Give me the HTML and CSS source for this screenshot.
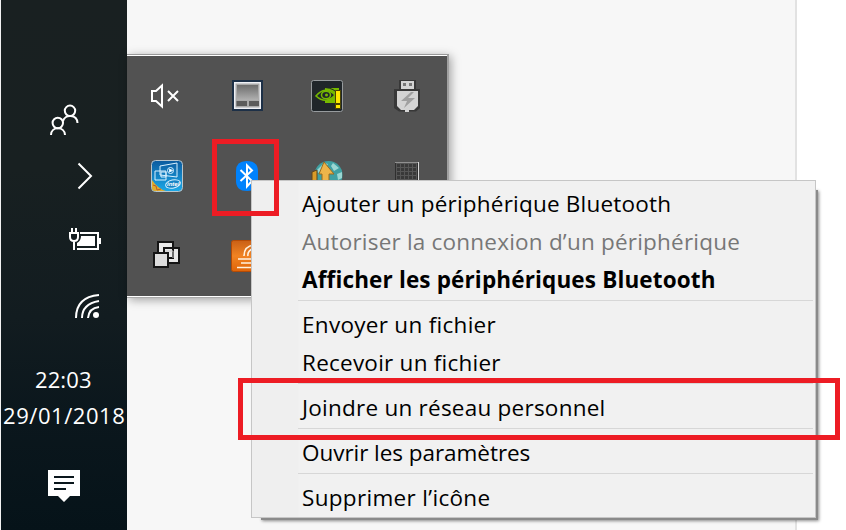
FILE: index.html
```html
<!DOCTYPE html>
<html lang="fr">
<head>
<meta charset="utf-8">
<title>Menu Bluetooth</title>
<link rel="stylesheet" href="styles.css">
</head>
<body>
<div class="desktop">
  <aside class="taskbar">
    <svg class="people" width="30" height="32" viewBox="49 104 30 32" fill="none" stroke="#fff" stroke-width="2"><circle cx="57.800" cy="123" r="5.200"/><path d="M51 135c0-9 13.800-9 14 0"/><circle cx="70" cy="110.800" r="5.200"/><path d="M63 121c2-7 14-7 14.500 2"/></svg>
    <svg class="chevron" width="16" height="28" viewBox="77 162 16 28" fill="none" stroke="#fff" stroke-width="2"><path d="M78.500 163.500 91 176 78.500 188.500"/></svg>
    <svg class="battery" width="34" height="24" viewBox="68 227 34 24"><path d="M80 233H98V249H77" fill="none" stroke="#fff" stroke-width="2"/><path d="M81 236H95V246H77V243Q81 241 81 236M99 238h2v6h-2z" fill="#fff"/><path d="M72 228v5M76 228v5M74 242v8M70 233h8v4q0 4-4 4t-4-4z" fill="none" stroke="#fff" stroke-width="2"/></svg>
    <svg class="wifi" width="26" height="26" viewBox="74 293 26 26" fill="none" stroke="#fff" stroke-width="2"><circle cx="96" cy="315" r="3" fill="#fff" stroke="none"/><path d="M76 318Q76 297 99 295M82 318Q82 304 99 301M88 318Q89 308 99 307"/></svg>
    <div class="clock"><span class="time">22:03</span><span class="date">29/01/2018</span></div>
    <svg class="notice" width="32" height="32" viewBox="48 470 32 32"><path d="M48 470H80V496H70L64 502 58 496H48z" fill="#fff"/><path d="M54 477H74M54 483H74M54 489H66" stroke="#0a161c" stroke-width="2"/></svg>
  </aside>

  <section class="tray">
    <div class="cell"><svg width="32" height="32" viewBox="151 80 32 32" fill="none" stroke="#fff" stroke-width="2"><path d="M152 91H156L162 85.500V106.500L156 101H152zM168 91 178 101M178 91 168 101"/></svg></div>
    <div class="cell"><svg width="32" height="32" viewBox="231 80 32 32"><defs><linearGradient id="pad" x2="0" y2="1"><stop stop-color="#6d6d6d"/><stop offset="1" stop-color="#b0b0b0"/></linearGradient></defs><path d="M232 80h31v31h-31z" fill="#1d3047"/><path d="M234 82h27v27h-27z" fill="#eef0f5"/><path d="M235.500 83.500h24v24h-24z" fill="#a9a9a9"/><path d="M237 85h21v15h-21z" fill="url(#pad)"/><path d="M236.500 101h10.500v5h-10.500zM249 101h10v5h-10z" fill="#5b5b5b"/></svg></div>
    <div class="cell"><svg width="32" height="32" viewBox="311 80 32 32"><rect x="311.500" y="80.500" width="31" height="31" rx="2" fill="#20262a" stroke="#979b9e"/><path d="M325 88H339V103H325z" fill="#76b900"/><path d="M316 96Q325 85 335 95 326 105 316 96z" fill="#20262a" stroke="#76b900" stroke-width="1.600"/><ellipse cx="326" cy="95" rx="4.500" ry="3.800" fill="#20262a" stroke="#76b900" stroke-width="1.500"/><circle cx="326.500" cy="95" r="1.500" fill="#76b900"/><path d="M325 87.500Q334 88 339 95" fill="none" stroke="#20262a"/><path d="M335.500 90.500h5v13h-5zM335.500 104.500h5v4h-5z" fill="#ffe800" stroke="#4a4300"/></svg></div>
    <div class="cell"><svg width="32" height="32" viewBox="391 80 32 32"><path d="M399 80h17v9h4v19l-4 3.500h-17l-5-3.500V89h5z" fill="#383838"/><path d="M401 81h13v8h-13zM397 91h21v15l-4 4h-5v2h-4v-2h-4l-4-4z" fill="#d4d4d4"/><path d="M403 83h3v3h-3zM409 83h3v3h-3z" fill="#777"/><path d="m411 92-10 9h6l-3 7 11-10h-7l6-6z" fill="#a0a0a0"/></svg></div>

    <div class="cell"><svg width="32" height="32" viewBox="151 160 32 32"><defs><linearGradient id="intel" x2="0" y2="1"><stop stop-color="#0b5b9f"/><stop offset="1" stop-color="#1ca9e8"/></linearGradient></defs><rect x="151.500" y="160.500" width="31" height="31" rx="4" fill="url(#intel)" stroke="#b9c5cc"/><path d="M152 180Q158 189 166 191H155Q152 191 152 188z" fill="#e0ad2e"/><path d="m153 185 3 1 1 4 4-1" fill="none" stroke="#bf5a25"/><g fill="none" stroke="#d8f1ff"><path d="m160 166 17-3v14l-17-2zM155 171h11v9h-11zM161 172h5v5h-5z"/><circle cx="170.500" cy="170.500" r="3"/><path d="m169.500 169 3 1.500-3 1.500z" fill="#fff"/><ellipse cx="173" cy="184" rx="7.500" ry="4" transform="rotate(-12 173 184)" fill="#1784c5"/></g><text x="167" y="186" class="intel-name">intel</text></svg></div>
    <div class="cell"><svg width="32" height="32" viewBox="231 160 32 32"><path d="M246.500 161Q258 161 258 171V181Q258 191 247 191 236 191 236 181V171Q236 161 246.500 161z" fill="#0082fc"/><path d="m240.500 170 11.500 11-5 5.500v-21l5 5-11.500 10.500" fill="none" stroke="#fff" stroke-width="2"/></svg></div>
    <div class="cell"><svg width="32" height="32" viewBox="311 160 32 32"><circle cx="328.500" cy="175" r="14" fill="#3fa0a2"/><path d="m317 170 7-7 4 1-3 5-7 4zM333 163l6 5-5 3-3-5zM337 174l5-2v6l-4 2z" fill="#9ad7d2"/><path d="M312 172l5-2v17h-5z" fill="#d99b28" stroke="#5e441d"/><path d="m324 162 10 12h-5v14h-7v-14h-3z" fill="#edb54a" stroke="#9a6b20"/></svg></div>
    <div class="cell"><svg width="32" height="32" viewBox="391 160 32 32"><defs><pattern id="mesh" x="396" y="163" width="4" height="4" patternUnits="userSpaceOnUse"><path d="M0 0h4v4H0z" fill="#565656"/><path d="M1 1h3v3H1z" fill="#393939"/></pattern></defs><path d="M395 162h24v29h-24z" fill="#2f2f2f"/><path d="M396 163h21v27h-21z" fill="url(#mesh)"/><path d="M395 162.500h23" fill="none" stroke="#909090"/><path d="M418.500 162v29" fill="none" stroke="#d8d8d8"/></svg></div>

    <div class="cell"><svg width="32" height="32" viewBox="151 240 32 32" fill="#e9e9e9" stroke="#151515" stroke-width="2"><path d="M158 242h15v16h-15zM164 248h15v15h-15z"/><path d="M154 253h14v14h-14z" fill="#ddd"/><path d="M165 251h8v7" fill="none" stroke="#c8c8c8" stroke-width="1"/></svg></div>
    <div class="cell"><svg width="32" height="32" viewBox="231 240 32 32"><defs><linearGradient id="java" x2="0" y2="1"><stop stop-color="#c96016"/><stop offset=".5" stop-color="#f18322"/><stop offset="1" stop-color="#df6409"/></linearGradient></defs><rect x="231.500" y="240.500" width="31" height="31" rx="2" fill="url(#java)" stroke="#b54b05"/><path d="M244 256q0-10 10-11M248 256q-1-5 6-8M238 259h14M241 263h12M237 267.500h18" fill="none" stroke="#fff2df" stroke-width="1.600"/></svg></div>
  </section>

  <div class="page-edge"></div>

  <nav class="menu">
    <div class="item"><span class="add">Ajouter un périphérique Bluetooth</span></div>
    <div class="item disabled"><span class="allow">Autoriser la connexion d’un périphérique</span></div>
    <div class="item default"><span class="show">Afficher les périphériques Bluetooth</span></div>
    <hr>
    <div class="item"><span class="send">Envoyer un fichier</span></div>
    <div class="item"><span class="receive">Recevoir un fichier</span></div>
    <hr>
    <div class="item"><span class="join">Joindre un réseau personnel</span></div>
    <hr>
    <div class="item"><span class="settings">Ouvrir les paramètres</span></div>
    <hr>
    <div class="item"><span class="remove">Supprimer l’icône</span></div>
  </nav>
  <div class="marker marker-icon"></div>
  <div class="marker marker-item"></div>
</div>
</body>
</html>
```
FILE: styles.css
```css
* { box-sizing: border-box; }
body { margin: 0; overflow: hidden; font-family: "Open Sans", "Noto Sans", sans-serif; }
.desktop { position: relative; width: 846px; height: 530px; display: flex; background: #f7f7f7; overflow: hidden; }
svg { display: block; flex: none; }

.taskbar { width: 127px; flex: none; display: flex; flex-direction: column; align-items: flex-start; padding-top: 104px; border-left: 1px solid #f2f2f2; background: linear-gradient(#192021 0%, #182021 32%, #121c20 60%, #0b171d 78%, #061319 100%); color: #fff; }
.people { margin-left: 48px; }
.chevron { margin: 26px 0 0 76px; }
.battery { margin: 37px 0 0 67px; }
.wifi { margin: 42px 0 0 73px; }
.clock { margin-top: 42px; width: 126px; display: flex; flex-direction: column; font-size: 22px; line-height: 36px; white-space: nowrap; }
.time { margin-left: 34px; letter-spacing: 0.1px; }
.date { margin-left: 2px; letter-spacing: 0.55px; }
.notice { margin: 37px 0 0 47px; }

.tray { width: 322px; height: 244px; flex: none; margin-top: 54px; display: grid; grid-template: repeat(3, 80px) / repeat(4, 80px); background: #525252; border-top: 1px solid #999; border-right: 2px solid #a0a0a0; border-bottom: 1px solid #aaa; box-shadow: inset 0 1px #fff, inset 0 -1px #fff, 2px 2px 9px rgba(0, 0, 0, .35); padding-top: 1px; }
.cell { display: flex; align-items: center; justify-content: center; }
.intel-name { font: italic bold 6px "Liberation Sans", sans-serif; fill: #fff; }
.page-edge { margin-left: auto; width: 51px; background: #fff; border-left: 2px solid #e2e2e2; flex: none; }

.menu { position: absolute; left: 251px; top: 180px; width: 565px; height: 338px; padding: 4px 2px 0 46px; border: 1px solid #c6c6c6; background: linear-gradient(90deg, #efefef 46px, #f1f1f1 47px); box-shadow: 6px 6px 0 -4px #8a8a8a, 7px 7px 3px -4px rgba(0, 0, 0, .45); }
.item { height: 38px; padding-left: 4px; font-size: 22.5px; line-height: 38px; white-space: nowrap; color: #000; }
.disabled { color: #777; }
.default { font-weight: 700; }
.menu hr { height: 1px; margin: 1px 0 5px; border: 0; background: #d7d7d7; }
.add, .allow { letter-spacing: 0.21px; }
.show { letter-spacing: 0.15px; }
.send { letter-spacing: 0.29px; }
.receive { letter-spacing: 0.24px; }
.join { letter-spacing: 0.24px; }
.settings { letter-spacing: -0.05px; }
.remove { letter-spacing: 0.32px; }

.marker { position: absolute; border: 5px solid #ed1c24; }
.marker-icon { left: 212px; top: 139px; width: 67px; height: 77px; }
.marker-item { left: 238px; top: 378px; width: 602px; height: 62px; }
```
